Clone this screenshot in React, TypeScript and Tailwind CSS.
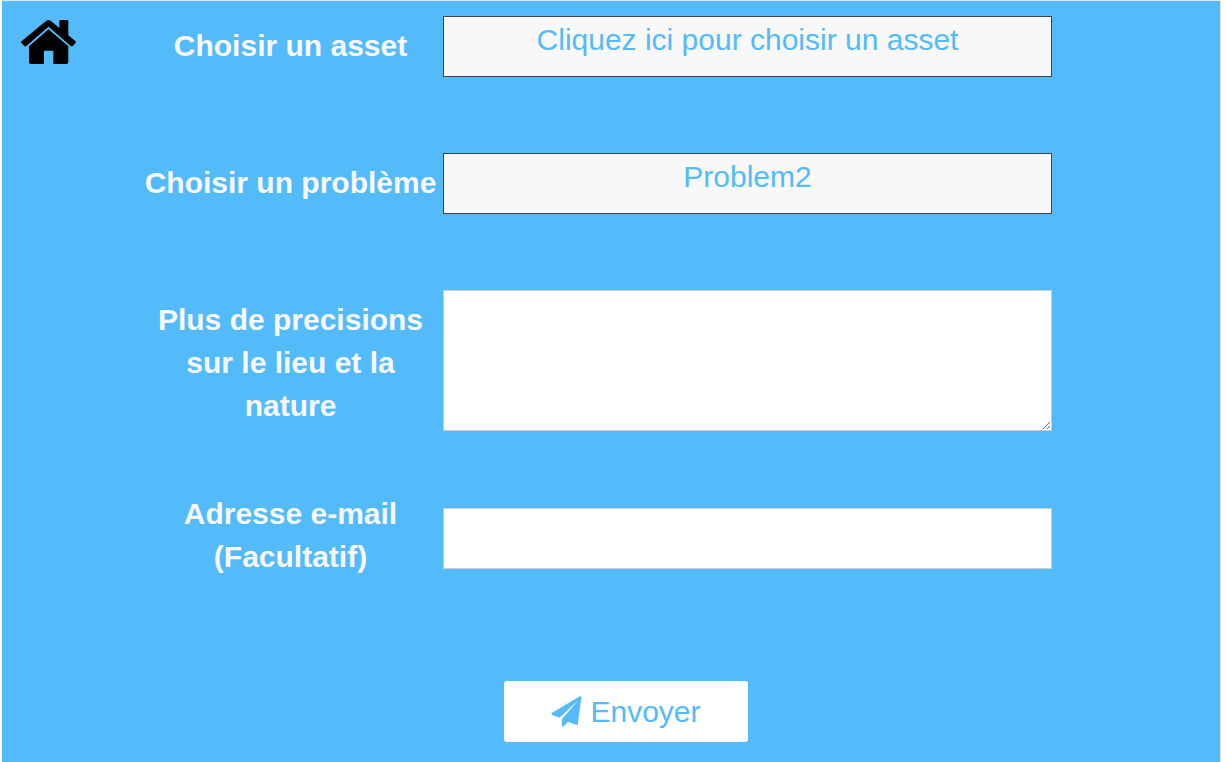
import type { ReactNode } from "react";

const COLUMNS = "grid grid-cols-[136fr_305fr_609fr_168fr] items-start";

function HomeIcon() {
  return (
    <svg viewBox="0 0 165 132" fill="currentColor" aria-hidden="true" className="mt-1 h-[44px] w-[55px]">
      <path d="M76 2Q82.500 -2 89 2L115 24V4Q115 0 119 0H138Q142 0 142 4V46L163 63Q166 67 163 70L156 77Q152 80 148 77L82.500 20L17 77Q13 80 9 77L2 70Q-1 67 2 63Z" />
      <path d="M82.500 28L142 79V126Q142 132 136 132H97V92H69V132H30Q24 132 24 126V79Z" />
    </svg>
  );
}

function PlaneIcon() {
  return (
    <svg viewBox="0 0 93 95" fill="currentColor" aria-hidden="true" className="size-[31px]">
      <path d="M88 1Q93 -1 92 5L81 86Q80 90 76 88L51 79L38 93Q33 96 32 91V71L82 14L25 67L3 58Q-2 55 2 51Z" />
    </svg>
  );
}

type RowProps = {
  id: string;
  label: string;
  labelClass?: string;
  lead?: ReactNode;
  children: ReactNode;
};

function Row({ id, label, labelClass = "pt-2", lead, children }: RowProps) {
  return (
    <div className={COLUMNS}>
      <div className="pl-[19px]">{lead}</div>
      <label htmlFor={id} className={`text-center font-bold text-[#f8f8ff] ${labelClass}`}>
        {label}
      </label>
      {children}
    </div>
  );
}

const picker =
  "block h-[61px] w-full border border-[#444] bg-[#f8f8f8] pb-[14px] text-center text-[#54bbfa]";

export default function App() {
  return (
    <div className="min-h-screen bg-white pr-[5px] pl-[2px]">
      <form
        onSubmit={(e) => e.preventDefault()}
        className="flex min-h-screen flex-col border-t border-r border-[#e2e5e8] bg-[#54bbfa] pt-[15px] pb-5 font-['Liberation_Sans',Arial,sans-serif] text-[30px] leading-[43px]"
      >
        <div className="flex flex-col gap-[76px]">
          <Row
            id="asset"
            label="Choisir un asset"
            lead={
              <a href="#" aria-label="Accueil" className="inline-block align-top text-black">
                <HomeIcon />
              </a>
            }
          >
            <button id="asset" type="button" className={picker}>
              Cliquez ici pour choisir un asset
            </button>
          </Row>
          <Row id="problem" label="Choisir un problème">
            <button id="problem" type="button" className={picker}>
              Problem2
            </button>
          </Row>
          <Row id="details" label="Plus de precisions sur le lieu et la nature" labelClass="px-4 pt-2">
            <textarea
              id="details"
              className="block h-[141px] w-full resize border border-[#ccc] bg-white px-3"
            />
          </Row>
        </div>
        <div className="pt-[61px]">
          <Row id="email" label="Adresse e-mail (Facultatif)" labelClass="px-4">
            <input
              id="email"
              type="email"
              className="mt-4 block h-[61px] w-full border border-[#ccc] bg-white px-3"
            />
          </Row>
        </div>
        <div className="flex justify-center pt-[103px] pl-[30px]">
          <button
            type="submit"
            className="flex h-[61px] w-[20.5%] items-center justify-center gap-2 rounded-[3px] bg-white text-[#54bbfa]"
          >
            <PlaneIcon />
            Envoyer
          </button>
        </div>
      </form>
    </div>
  );
}
